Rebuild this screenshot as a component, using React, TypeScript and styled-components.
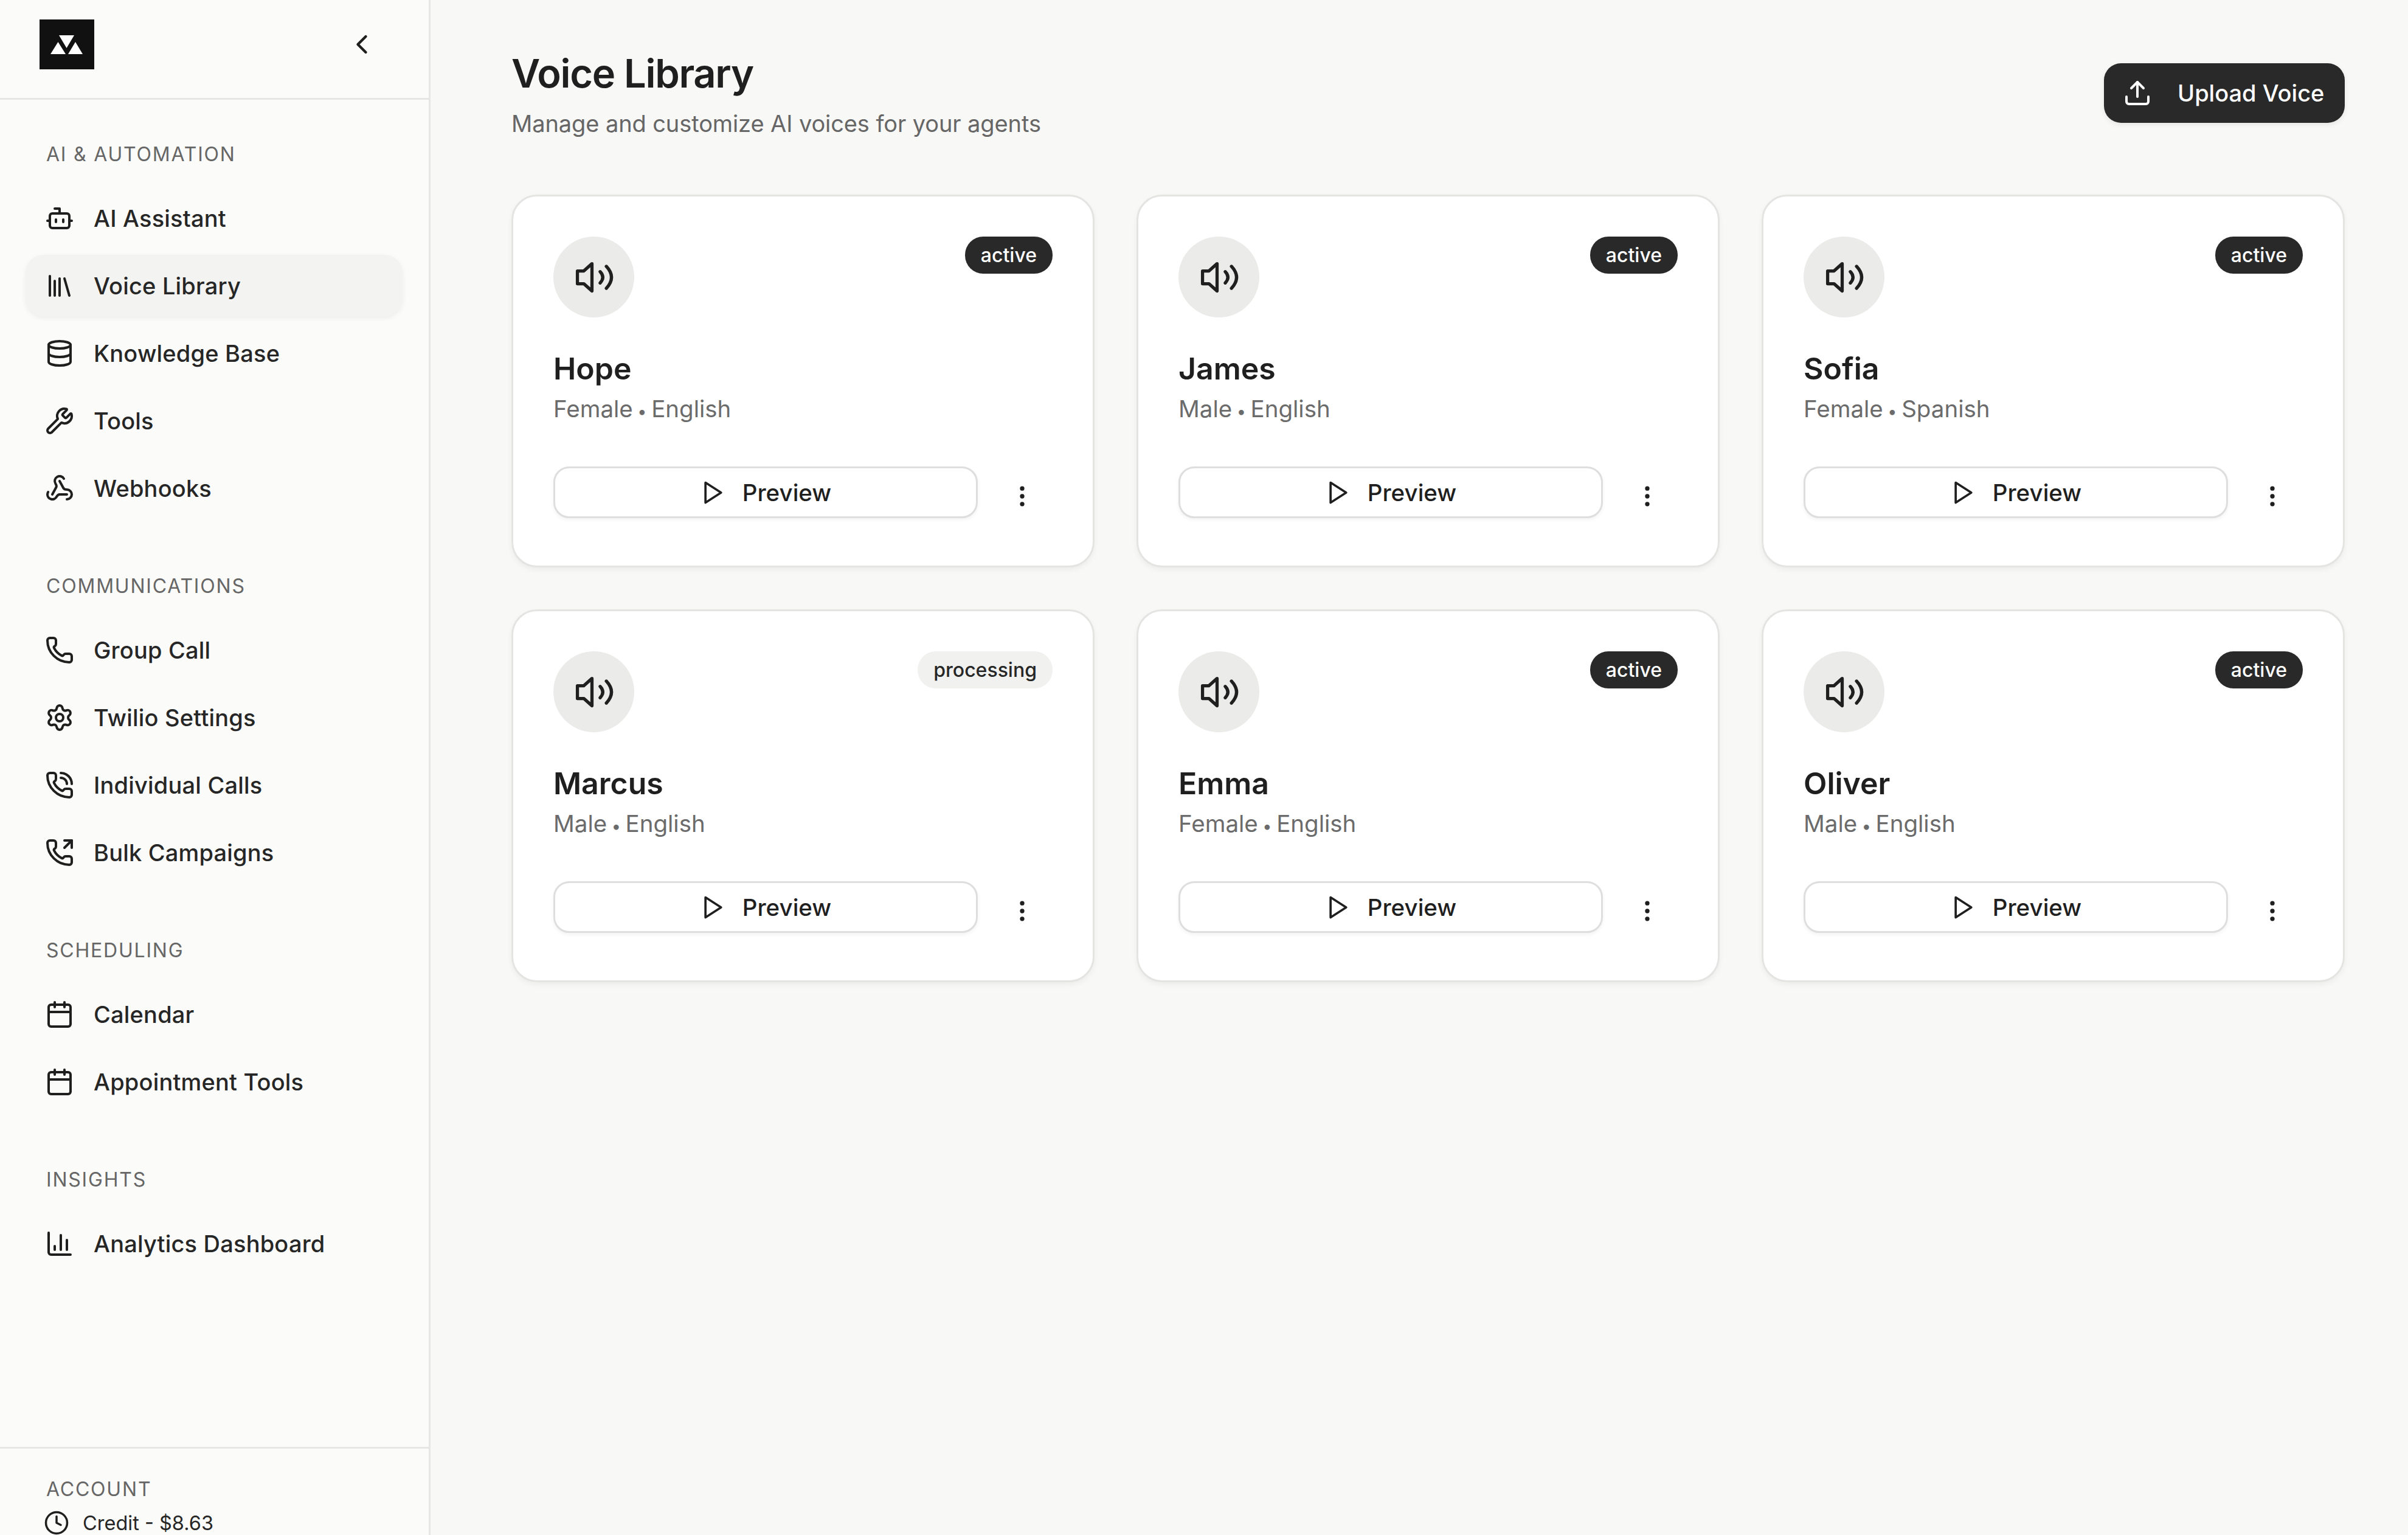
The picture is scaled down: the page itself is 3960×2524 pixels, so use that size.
import React from 'react';
import styled, { createGlobalStyle } from 'styled-components';
import {
    Bot,
    Calendar,
    ChartColumn,
    ChevronLeft,
    Clock,
    Database,
    EllipsisVertical,
    Library,
    Phone,
    PhoneCall,
    PhoneOutgoing,
    Settings,
    Upload,
    Webhook,
    Wrench,
} from 'lucide-react';

const navSections = [
    {
        title: 'AI & Automation',
        items: [
            { label: 'AI Assistant', icon: Bot },
            { label: 'Voice Library', icon: Library, active: true },
            { label: 'Knowledge Base', icon: Database },
            { label: 'Tools', icon: Wrench },
            { label: 'Webhooks', icon: Webhook },
        ],
    },
    {
        title: 'Communications',
        items: [
            { label: 'Group Call', icon: Phone },
            { label: 'Twilio Settings', icon: Settings },
            { label: 'Individual Calls', icon: PhoneCall },
            { label: 'Bulk Campaigns', icon: PhoneOutgoing },
        ],
    },
    {
        title: 'Scheduling',
        items: [
            { label: 'Calendar', icon: Calendar },
            { label: 'Appointment Tools', icon: Calendar },
        ],
    },
    {
        title: 'Insights',
        items: [{ label: 'Analytics Dashboard', icon: ChartColumn }],
    },
];

const voices = [
    { name: 'Hope', gender: 'Female', language: 'English', status: 'active' },
    { name: 'James', gender: 'Male', language: 'English', status: 'active' },
    { name: 'Sofia', gender: 'Female', language: 'Spanish', status: 'active' },
    { name: 'Marcus', gender: 'Male', language: 'English', status: 'processing' },
    { name: 'Emma', gender: 'Female', language: 'English', status: 'active' },
    { name: 'Oliver', gender: 'Male', language: 'English', status: 'active' },
];

const LogoMark = () => (
    <svg width="90" height="82" viewBox="0 0 90 82">
        <rect width="90" height="82" fill="#111111" />
        <path d="M32 26h25L44.500 47zM18 57l12.500-20L43 57zM47 57l12-20 12 20z" fill="#ffffff" />
    </svg>
);

const SpeakerIcon = () => (
    <svg width="70" height="70" viewBox="0 0 24 24" fill="none" stroke="#1f1f1f" strokeWidth="1.8" strokeLinecap="round" strokeLinejoin="round">
        <path d="M10.800 4.300 6.200 8.400H2.600v7.200h3.600l4.600 4.100z" />
        <path d="M15.400 8.800Q18.400 12 15.400 15.200" />
        <path d="M18.900 5.800Q24.700 12 18.900 18.200" />
    </svg>
);

const PlayIcon = () => (
    <svg width="44" height="44" viewBox="0 0 24 24" fill="none" stroke="#1f1f1f" strokeWidth="2" strokeLinejoin="round">
        <path d="M5 3l14 9-14 9z" />
    </svg>
);

const App: React.FunctionComponent = () => {
    return (
        <Style.Page>
            <GlobalStyle />
            <Style.Sidebar>
                <Style.SidebarHeader>
                    <LogoMark />
                    <ChevronLeft size={52} strokeWidth={2} color="#1f1f1f" />
                </Style.SidebarHeader>
                <Style.Nav>
                    {navSections.map((section) => (
                        <Style.NavSection key={section.title}>
                            <Style.SectionLabel>{section.title}</Style.SectionLabel>
                            <Style.NavList>
                                {section.items.map((item) => (
                                    <Style.NavItem key={item.label} $active={item.active}>
                                        <item.icon size={48} strokeWidth={2} color="#1f1f1f" />
                                        {item.label}
                                    </Style.NavItem>
                                ))}
                            </Style.NavList>
                        </Style.NavSection>
                    ))}
                </Style.Nav>
                <Style.SidebarFooter>
                    <Style.SectionLabel>Account</Style.SectionLabel>
                    <Style.Credit>
                        <Clock size={42} strokeWidth={2} color="#1f1f1f" />
                        Credit - $8.63
                    </Style.Credit>
                </Style.SidebarFooter>
            </Style.Sidebar>
            <Style.Main>
                <Style.MainHeader>
                    <div>
                        <Style.Title>Voice Library</Style.Title>
                        <Style.Subtitle>Manage and customize AI voices for your agents</Style.Subtitle>
                    </div>
                    <Style.UploadButton>
                        <Upload size={48} strokeWidth={2} color="#ffffff" />
                        Upload Voice
                    </Style.UploadButton>
                </Style.MainHeader>
                <Style.Grid>
                    {voices.map((voice) => (
                        <Style.Card key={voice.name}>
                            <Style.CardTop>
                                <Style.Avatar>
                                    <SpeakerIcon />
                                </Style.Avatar>
                                <Style.Badge $active={voice.status === 'active'}>{voice.status}</Style.Badge>
                            </Style.CardTop>
                            <Style.VoiceName>{voice.name}</Style.VoiceName>
                            <Style.VoiceMeta>
                                {voice.gender}
                                <Style.MetaDot> • </Style.MetaDot>
                                {voice.language}
                            </Style.VoiceMeta>
                            <Style.CardActions>
                                <Style.PreviewButton>
                                    <PlayIcon />
                                    Preview
                                </Style.PreviewButton>
                                <Style.MoreButton>
                                    <EllipsisVertical size={44} strokeWidth={2} color="#1f1f1f" />
                                </Style.MoreButton>
                            </Style.CardActions>
                        </Style.Card>
                    ))}
                </Style.Grid>
            </Style.Main>
        </Style.Page>
    );
};

const GlobalStyle = createGlobalStyle`
    html,
    body {
        margin: 0;
        padding: 0;
        height: 2524px;
        overflow: hidden;
    }
    * {
        box-sizing: border-box;
    }
    body {
        font-family: Inter, "Liberation Sans", sans-serif;
        color: #1f1f1f;
        background-color: #f8f8f6;
    }
`;

const Style = {
    Page: styled.div`
        display: flex;
        width: 3960px;
        height: 2524px;
        overflow: hidden;
    `,
    Sidebar: styled.aside`
        width: 708px;
        flex-shrink: 0;
        display: flex;
        flex-direction: column;
        height: 100%;
        background-color: #fbfbf9;
        border-right: 3px solid #e6e6e4;
    `,
    SidebarHeader: styled.div`
        height: 164px;
        flex-shrink: 0;
        display: flex;
        justify-content: space-between;
        align-items: center;
        padding: 0 84px 16px 65px;
        border-bottom: 3px solid #e6e6e4;
    `,
    Nav: styled.nav`
        flex: 1;
        min-height: 0;
        display: flex;
        flex-direction: column;
        gap: 91px;
        padding: 70px 43px 0 42px;
    `,
    NavSection: styled.section`
        display: flex;
        flex-direction: column;
    `,
    SectionLabel: styled.div`
        height: 40px;
        line-height: 40px;
        padding-left: 34px;
        font-size: 32px;
        letter-spacing: 0.056em;
        text-transform: uppercase;
        color: #666666;
    `,
    NavList: styled.div`
        display: flex;
        flex-direction: column;
        gap: 10px;
        margin-top: 34px;
    `,
    NavItem: styled.div<{ $active?: boolean }>`
        height: 101px;
        display: flex;
        align-items: center;
        gap: 32px;
        padding-left: 32px;
        border-radius: 30px;
        font-size: 38px;
        letter-spacing: 0.005em;
        font-weight: 500;
        color: #262626;
        background-color: ${(p) => (p.$active ? '#f3f3f1' : 'transparent')};
        box-shadow: ${(p) => (p.$active ? '0 3px 8px rgba(0, 0, 0, 0.06)' : 'none')};
    `,
    SidebarFooter: styled.div`
        flex-shrink: 0;
        height: 145px;
        padding: 47px 42px 0 42px;
        border-top: 3px solid #e6e6e4;
    `,
    Credit: styled.div`
        display: flex;
        align-items: center;
        gap: 22px;
        margin-top: 14px;
        padding-left: 30px;
        font-size: 32.500px;
        color: #262626;
    `,
    Main: styled.main`
        flex: 1;
        min-width: 0;
        padding: 81px 104px 0 133px;
    `,
    MainHeader: styled.header`
        display: flex;
        justify-content: space-between;
        align-items: center;
        margin-bottom: 95px;
    `,
    Title: styled.h1`
        margin: 0;
        font-size: 65px;
        line-height: 80px;
        font-weight: 600;
        letter-spacing: -0.02em;
        color: #1f1f1f;
    `,
    Subtitle: styled.p`
        margin: 20px 0 0;
        font-size: 38px;
        letter-spacing: -0.1px;
        line-height: 44px;
        color: #666666;
    `,
    UploadButton: styled.button`
        display: flex;
        align-items: center;
        gap: 42px;
        width: 396px;
        height: 98px;
        padding: 0 0 0 31px;
        border: none;
        border-radius: 28px;
        background-color: #292929;
        color: #ffffff;
        font-family: inherit;
        font-size: 38px;
        font-weight: 500;
        box-shadow: 0 3px 8px rgba(0, 0, 0, 0.08);
    `,
    Grid: styled.div`
        display: grid;
        grid-template-columns: repeat(3, 1fr);
        gap: 69px;
    `,
    Card: styled.article`
        height: 613px;
        padding: 66px;
        border: 3px solid #e4e4e2;
        border-radius: 42px;
        background-color: #ffffff;
        box-shadow: 0 4px 10px rgba(0, 0, 0, 0.05);
    `,
    CardTop: styled.div`
        display: flex;
        justify-content: space-between;
        align-items: flex-start;
    `,
    Avatar: styled.div`
        width: 133px;
        height: 133px;
        display: flex;
        align-items: center;
        justify-content: center;
        border-radius: 50%;
        background-color: #ebebea;
    `,
    Badge: styled.span<{ $active: boolean }>`
        height: 61px;
        line-height: 61px;
        padding: 0 26px;
        border-radius: 30px;
        font-size: 32px;
        font-weight: 500;
        color: ${(p) => (p.$active ? '#ffffff' : '#262626')};
        background-color: ${(p) => (p.$active ? '#292929' : '#f1f1f0')};
    `,
    VoiceName: styled.h3`
        margin: 56px 0 0;
        font-size: 50px;
        line-height: 56px;
        font-weight: 600;
        color: #1f1f1f;
    `,
    VoiceMeta: styled.p`
        margin: 16px 0 0;
        font-size: 38.500px;
        line-height: 44px;
        color: #6b6b6b;
    `,
    MetaDot: styled.span`
        font-size: 27px;
        line-height: 1;
        white-space: pre;
    `,
    CardActions: styled.div`
        display: flex;
        align-items: flex-start;
        gap: 23px;
        margin-top: 73px;
    `,
    PreviewButton: styled.button`
        flex: 1;
        height: 85px;
        display: flex;
        align-items: center;
        justify-content: center;
        gap: 26px;
        border: 3px solid #dedede;
        border-radius: 26px;
        background-color: #ffffff;
        color: #1f1f1f;
        font-family: inherit;
        font-size: 38.500px;
        font-weight: 500;
        box-shadow: 0 3px 6px rgba(0, 0, 0, 0.05);
    `,
    MoreButton: styled.button`
        width: 100px;
        height: 98px;
        flex-shrink: 0;
        display: flex;
        align-items: center;
        justify-content: center;
        padding: 0;
        border: none;
        background: transparent;
    `,
};

export default App;
